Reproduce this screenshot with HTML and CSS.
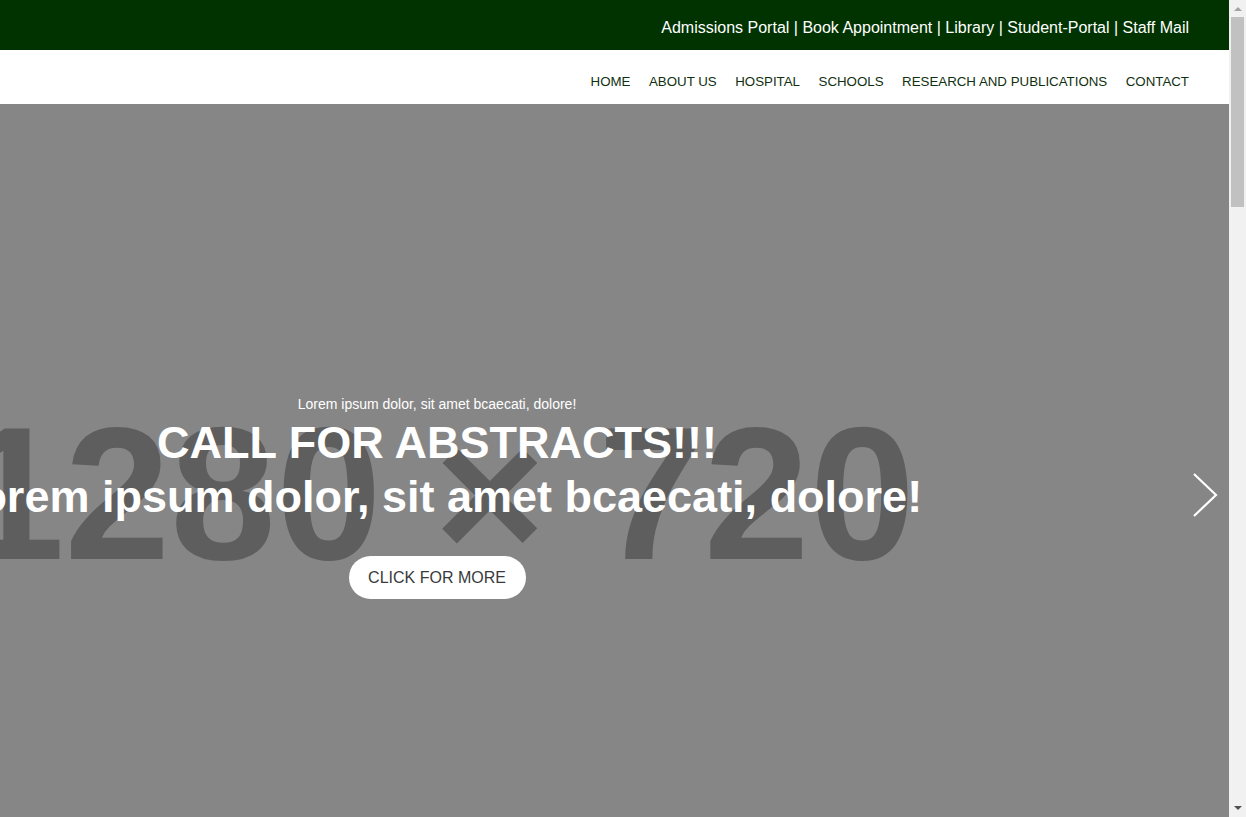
FILE: index.html
```html
<!DOCTYPE html>
<html lang="en">
<head>
<meta charset="utf-8">
<title>University Home</title>
<link rel="stylesheet" href="styles.css">
</head>
<body>
<header class="site-header">
  <div class="topbar">
    <nav class="quick-links">
      <a href="#">Admissions Portal</a> | <a href="#">Book Appointment</a> | <a href="#">Library</a> | <a href="#">Student-Portal</a> | <a href="#">Staff Mail</a>
    </nav>
  </div>
  <div class="mainnav">
    <nav class="menu">
      <a href="#">HOME</a>
      <a href="#">ABOUT US</a>
      <a href="#">HOSPITAL</a>
      <a href="#">SCHOOLS</a>
      <a href="#">RESEARCH AND PUBLICATIONS</a>
      <a href="#">CONTACT</a>
    </nav>
  </div>
</header>

<section class="hero">
  <div class="stage">
    <div class="placeholder"><span>1280 × 720</span></div>
    <div class="caption">
      <p class="caption-kicker">Lorem ipsum dolor, sit amet bcaecati, dolore!</p>
      <h1 class="caption-title">CALL FOR ABSTRACTS!!!<br>Lorem ipsum dolor, sit amet bcaecati, dolore!</h1>
      <a class="caption-btn" href="#">CLICK FOR MORE</a>
    </div>
  </div>
  <a class="next" href="#" aria-label="Next">
    <svg width="26" height="44" viewBox="0 0 26 44"><path d="M2 1 L24 22 L2 43" fill="none" stroke="#fff" stroke-width="2.2"/></svg>
  </a>
</section>

<div class="scrollbar" aria-hidden="true">
  <span class="sb-up"></span>
  <span class="sb-thumb"></span>
  <span class="sb-down"></span>
</div>
</body>
</html>
```
FILE: styles.css
```css
* { box-sizing: border-box; }
html, body { margin: 0; padding: 0; }
body {
  font-family: "Liberation Sans", Arial, sans-serif;
  color: #222;
  background: #fff;
  padding-right: 17px;
  height: 817px;
  overflow: hidden;
}
a { text-decoration: none; color: inherit; }

.topbar {
  background: #003300;
  height: 50px;
  display: flex;
  justify-content: flex-end;
  align-items: center;
  padding: 6px 40px 0 0;
}
.quick-links {
  color: #fff;
  font-size: 16px;
  white-space: nowrap;
}

.mainnav {
  background: #fff;
  height: 54px;
  display: flex;
  justify-content: flex-end;
  align-items: center;
  padding: 9px 40px 0 0;
}
.menu {
  display: flex;
  gap: 18.5px;
  font-size: 13.3px;
  color: #0f300f;
}

.hero {
  position: relative;
  background: #868686;
  height: 713px;
  overflow: hidden;
}
.stage {
  width: 874px;
  height: 786px;
  display: grid;
  grid-template-columns: 100%;
  align-items: center;
}
.placeholder, .caption {
  grid-area: 1 / 1;
}
.placeholder {
  display: flex;
  justify-content: center;
  font-size: 190px;
  font-weight: 700;
  color: #5e5e5e;
  white-space: nowrap;
  line-height: 1;
  padding-bottom: 8px;
}
.caption {
  display: flex;
  flex-direction: column;
  align-items: center;
  color: #fff;
  text-align: center;
  white-space: nowrap;
}
.caption-kicker {
  margin: 0 0 4px;
  font-size: 14px;
}
.caption-title {
  margin: 0;
  font-size: 45px;
  line-height: 54px;
  font-weight: 700;
}
.caption-btn {
  margin-top: 32px;
  background: #fff;
  color: #3a3a3a;
  font-size: 16px;
  width: 177px;
  height: 43px;
  padding-top: 2px;
  border-radius: 22px;
  display: flex;
  align-items: center;
  justify-content: center;
}
.next {
  position: absolute;
  right: 11px;
  top: 369px;
  display: flex;
}

.scrollbar {
  position: fixed;
  top: 0;
  right: 0;
  width: 17px;
  height: 817px;
  background: #f1f1f1;
  display: flex;
  flex-direction: column;
  align-items: center;
}
.sb-up, .sb-down {
  width: 0;
  height: 0;
  border-left: 4px solid transparent;
  border-right: 4px solid transparent;
}
.sb-up {
  margin-top: 7px;
  border-bottom: 4px solid #a3a3a3;
}
.sb-thumb {
  margin-top: 6px;
  width: 13px;
  height: 190px;
  background: #c1c1c1;
}
.sb-down {
  margin-top: auto;
  margin-bottom: 7px;
  border-top: 4px solid #505050;
}
```
